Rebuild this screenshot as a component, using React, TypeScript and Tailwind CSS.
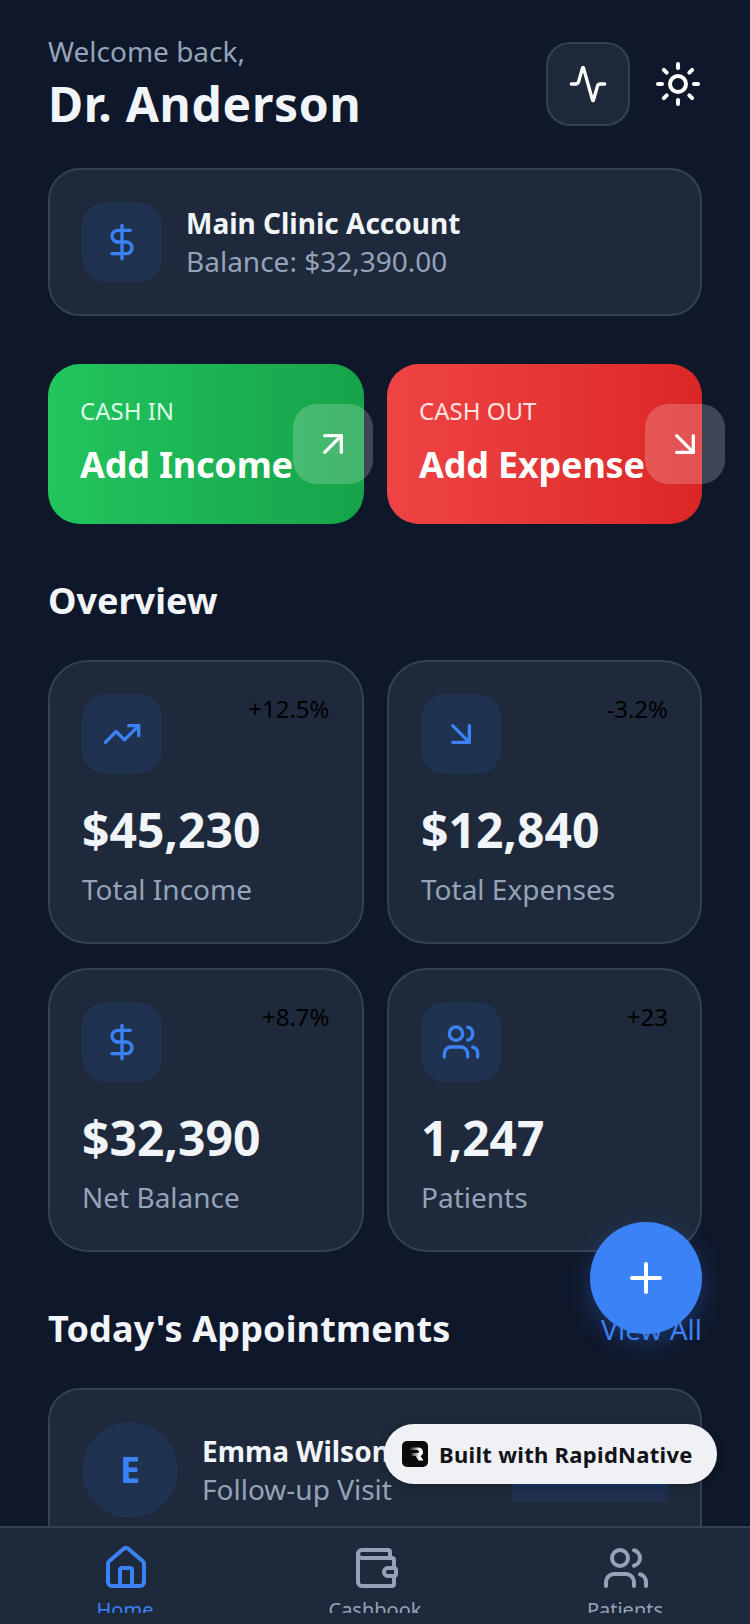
import { Activity, Sun, DollarSign, ArrowUpRight, ArrowDownRight, TrendingUp, Users, Plus, House, Wallet } from 'lucide-react';
import type { ReactNode } from 'react';

const stats = [
  { icon: <TrendingUp size={40} />, change: '+12.5%', value: '$45,230', label: 'Total Income' },
  { icon: <ArrowDownRight size={40} />, change: '-3.2%', value: '$12,840', label: 'Total Expenses' },
  { icon: <DollarSign size={40} />, change: '+8.7%', value: '$32,390', label: 'Net Balance' },
  { icon: <Users size={40} />, change: '+23', value: '1,247', label: 'Patients' },
];

function IconBox({ children }: { children: ReactNode }) {
  return (
    <div className="w-20 h-20 rounded-[24px] bg-[#1f3250] flex items-center justify-center text-[#3b82f6] shrink-0">
      {children}
    </div>
  );
}

function StatCard({ icon, change, value, label }: { icon: ReactNode; change: string; value: string; label: string }) {
  return (
    <div className="h-[284px] rounded-[40px] bg-[#1e293b] border-2 border-[#334155] p-8">
      <div className="flex justify-between items-start">
        <IconBox>{icon}</IconBox>
        <span className="text-[24px] leading-[30px] text-black">{change}</span>
      </div>
      <p className="mt-6 text-[48px] leading-[64px] font-bold text-[#f1f5f9]">{value}</p>
      <p className="mt-[7px] text-[28px] leading-10 text-[#94a3b8]">{label}</p>
    </div>
  );
}

function ActionCard({ gradient, tag, tagColor, title, icon }: { gradient: string; tag: string; tagColor: string; title: string; icon: ReactNode }) {
  return (
    <div className={`min-w-0 h-40 rounded-[32px] p-8 flex items-center ${gradient}`}>
      <div className="shrink-0 mb-1">
        <p className={`text-[24px] leading-8 ${tagColor}`}>{tag}</p>
        <p className="mt-[14px] text-[36px] leading-[48px] font-bold tracking-[-0.2px] text-white whitespace-nowrap">{title}</p>
      </div>
      <div className="w-20 h-20 shrink-0 rounded-[24px] bg-white/20 flex items-center justify-center text-white">
        {icon}
      </div>
    </div>
  );
}

function NavItem({ icon, label, active }: { icon: ReactNode; label: string; active?: boolean }) {
  return (
    <div className={`flex-1 flex flex-col items-center ${active ? 'text-[#3b82f6]' : 'text-[#94a3b8]'}`}>
      <div className="pl-[2px]">{icon}</div>
      <div className="mt-1 h-[17px] overflow-hidden">
        <span className="block text-[20px] leading-[27px]">{label}</span>
      </div>
    </div>
  );
}

export default function App() {
  return (
    <div className="relative h-[1624px] overflow-hidden bg-[#0f172a] font-['Noto_Sans',sans-serif]">
      <div className="px-12 pt-[33px]">
        <div className="flex items-center justify-between">
          <div>
            <p className="text-[28px] leading-9 text-[#94a3b8]">Welcome back,</p>
            <h1 className="mt-[5px] text-[48px] leading-[60px] font-bold tracking-[0.7px] text-[#f1f5f9]">Dr. Anderson</h1>
          </div>
          <div className="flex items-center gap-6">
            <div className="w-[84px] h-[84px] rounded-[24px] bg-[#1e293b] border-2 border-[#334155] flex items-center justify-center text-white">
              <Activity size={40} />
            </div>
            <Sun size={48} className="text-white" />
          </div>
        </div>

        <div className="mt-[34px] rounded-[32px] bg-[#1e293b] border-2 border-[#334155] p-8 flex items-center gap-6">
          <IconBox><DollarSign size={40} /></IconBox>
          <div>
            <p className="text-[28px] leading-[38px] font-bold text-[#f1f5f9]">Main Clinic Account</p>
            <p className="text-[28px] leading-[38px] text-[#94a3b8]">Balance: $32,390.00</p>
          </div>
        </div>

        <div className="mt-12 grid grid-cols-[315.5px_315px] gap-x-[23.5px]">
          <ActionCard
            gradient="bg-gradient-to-r from-[#22c55e] to-[#16a34a]"
            tag="CASH IN"
            tagColor="text-[#dcfce7]"
            title="Add Income"
            icon={<ArrowUpRight size={40} />}
          />
          <ActionCard
            gradient="bg-gradient-to-r from-[#ef4444] to-[#dc2626]"
            tag="CASH OUT"
            tagColor="text-[#fee2e2]"
            title="Add Expense"
            icon={<ArrowDownRight size={40} />}
          />
        </div>

        <h2 className="mt-[53px] text-[36px] leading-[48px] font-bold text-[#f1f5f9]">Overview</h2>
        <div className="mt-[35px] grid grid-cols-[315.5px_315px] gap-x-[23.5px] gap-y-6">
          {stats.map((s) => (
            <StatCard key={s.label} {...s} />
          ))}
        </div>

        <div className="mt-[53px] flex items-center justify-between">
          <h2 className="text-[36px] leading-[48px] font-bold tracking-[0.15px] text-[#f1f5f9]">Today's Appointments</h2>
          <span className="text-[28px] leading-9 text-[#3b82f6]">View All</span>
        </div>

        <div className="mt-[35px] h-[200px] rounded-[32px] bg-[#1e293b] border-2 border-[#334155] p-8 flex items-start gap-6">
          <div className="w-24 h-24 rounded-full bg-[#1f3250] flex items-center justify-center text-[36px] font-bold text-[#3b82f6]">E</div>
          <div className="h-24 flex flex-col justify-center">
            <p className="text-[28px] leading-[38px] font-bold text-[#f1f5f9]">Emma Wilson</p>
            <p className="text-[28px] leading-[38px] text-[#94a3b8]">Follow-up Visit</p>
          </div>
          <div className="ml-auto w-[156px] h-16 mt-4 bg-[#1f2f4d]">
            <div className="mt-[46px] h-[3px] bg-[#1a3766]" />
          </div>
        </div>
      </div>

      <button className="absolute left-[590px] top-[1222px] w-28 h-28 rounded-full bg-[#3b82f6] flex items-center justify-center text-white shadow-[0_8px_24px_rgba(59,130,246,0.3)]">
        <Plus size={48} />
      </button>

      <div className="absolute left-[384px] top-[1424px] w-[333px] h-[60px] rounded-full bg-[#f0f1f5] flex items-center pl-[18px] gap-[11px] shadow-[0_2px_8px_rgba(0,0,0,0.25)]">
        <svg width="26" height="26" viewBox="0 0 26 26">
          <defs>
            <linearGradient id="r" x1="0" x2="1" y1="0" y2="0">
              <stop offset="0.1" stopColor="#333" />
              <stop offset="0.7" stopColor="#fff" />
            </linearGradient>
          </defs>
          <rect width="26" height="26" rx="5" fill="#0a0a0a" />
          <path d="M8 6.5h8.5a4.5 4.5 0 0 1 2 8.5l3 4.5h-5l-3-4.5H9.5v-3h6a1.5 1.5 0 0 0 0-3H8z" fill="url(#r)" />
        </svg>
        <span className="text-[22px] leading-7 font-bold tracking-[0.3px] text-[#111318]">Built with RapidNative</span>
      </div>

      <nav className="absolute left-0 right-0 top-[1526px] h-[98px] bg-[#1e293b] border-t-2 border-[#334155] pt-4 flex">
        <NavItem icon={<House size={48} />} label="Home" active />
        <NavItem icon={<Wallet size={48} />} label="Cashbook" />
        <NavItem icon={<Users size={48} />} label="Patients" />
      </nav>
    </div>
  );
}
